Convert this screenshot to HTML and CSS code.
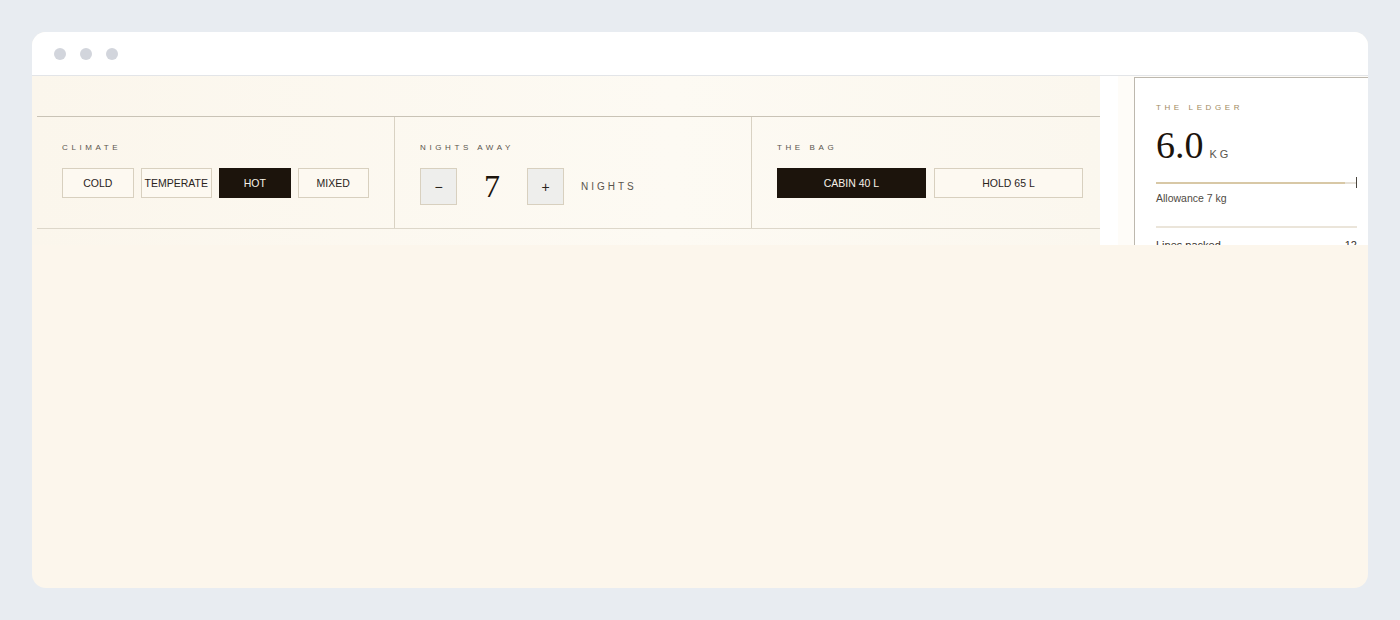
FILE: index.html
```html
<!DOCTYPE html>
<html lang="en">
<head>
  <meta charset="UTF-8">
  <title>Packing Ledger</title>
  <link rel="stylesheet" href="styles.css">
</head>
<body>
  <div class="frame">
    <div class="titlebar">
      <span class="dot"></span>
      <span class="dot"></span>
      <span class="dot"></span>
    </div>

    <div class="viewport">
      <div class="main">
        <div class="controls">
          <div class="cell">
            <div class="label">Climate</div>
            <div class="choices">
              <button class="choice">Cold</button>
              <button class="choice">Temperate</button>
              <button class="choice active">Hot</button>
              <button class="choice">Mixed</button>
            </div>
          </div>

          <div class="cell">
            <div class="label">Nights away</div>
            <div class="stepper">
              <button class="step">&minus;</button>
              <span class="count">7</span>
              <button class="step">+</button>
              <span class="unit">Nights</span>
            </div>
          </div>

          <div class="cell">
            <div class="label">The bag</div>
            <div class="choices bag">
              <button class="choice active">Cabin 40 L</button>
              <button class="choice">Hold 65 L</button>
            </div>
          </div>
        </div>
      </div>

      <div class="gutter"></div>

      <aside class="side">
        <div class="ledger">
          <div class="ledger-label">The ledger</div>
          <div class="weight">
            <span class="weight-num">6.0</span>
            <span class="weight-unit">KG</span>
          </div>
          <div class="meter">
            <div class="meter-fill" style="width: 94%"></div>
            <span class="meter-tick"></span>
          </div>
          <div class="allowance">Allowance 7 kg</div>
          <div class="ledger-row">
            <span>Lines packed</span>
            <span>12</span>
          </div>
        </div>
      </aside>
    </div>
  </div>
</body>
</html>
```

FILE: styles.css
```css
body {
  margin: 0;
  padding: 32px;
  background-color: #e8ecf1;
  font-family: "Liberation Sans", Arial, sans-serif;
  color: #2a241c;
}
.frame {
  height: 556px;
  background-color: #fcf6ec;
  border-radius: 14px;
  overflow: hidden;
}
.titlebar {
  height: 43px;
  background-color: #ffffff;
  border-bottom: 1px solid #e3e5e8;
  display: flex;
  align-items: center;
  gap: 14px;
  padding-left: 22px;
}
.dot {
  width: 12px;
  height: 12px;
  border-radius: 50%;
  background-color: #d2d5dc;
}
.viewport {
  height: 169px;
  display: flex;
  overflow: hidden;
}
.main {
  flex-shrink: 0;
  width: 1063px;
  padding: 40px 0 0 5px;
  overflow: hidden;
  background: linear-gradient(90deg, #fbf6ec, #fdfaf3 60%, #fbf7ee);
}
.controls {
  display: grid;
  grid-template-columns: 357px 357px 357px;
  border-top: 1px solid #c9c3b6;
  border-bottom: 1px solid #ddd7ca;
}
.cell {
  padding: 25px 25px 23px;
}
.cell + .cell {
  border-left: 1px solid #d9d2c3;
}
.label {
  font-size: 8px;
  line-height: 12px;
  letter-spacing: 3.6px;
  text-transform: uppercase;
  color: #5a554d;
  margin-bottom: 14px;
}
.choices {
  display: flex;
  gap: 7px;
}
.choices.bag {
  gap: 8px;
}
.choice {
  flex: 1;
  height: 30px;
  padding: 0;
  font-family: "Liberation Sans", Arial, sans-serif;
  font-size: 10.5px;
  text-transform: uppercase;
  color: #2a241c;
  background-color: #fdf9f1;
  border: 1px solid #d8d0bf;
}
.choice.active {
  background-color: #1c140c;
  border-color: #1c140c;
  color: #f6f1e8;
}
.stepper {
  display: flex;
  align-items: center;
}
.step {
  width: 37px;
  height: 37px;
  padding: 0;
  font-family: "Liberation Sans", Arial, sans-serif;
  font-size: 14px;
  color: #2a241c;
  background-color: #eeeeec;
  border: 1px solid #d8d0bf;
}
.count {
  width: 70px;
  text-align: center;
  font-family: "Liberation Serif", "Times New Roman", serif;
  font-size: 32px;
  color: #1c140c;
}
.unit {
  margin-left: 17px;
  font-size: 10px;
  letter-spacing: 3px;
  text-transform: uppercase;
  color: #5a554d;
}
.gutter {
  flex-shrink: 0;
  width: 18px;
  background-color: #ffffff;
}
.side {
  flex: 1;
  min-width: 0;
  overflow: hidden;
  padding: 1px 0 0 16px;
  background-color: #fefcf8;
}
.ledger {
  width: 201px;
  height: 300px;
  padding: 24px 21px;
  background-color: #ffffff;
  border: 1px solid #bdb8ae;
  border-right: none;
}
.ledger-label {
  font-size: 8px;
  line-height: 12px;
  letter-spacing: 3.6px;
  text-transform: uppercase;
  color: #a28b5f;
  margin-bottom: 9px;
}
.weight {
  display: flex;
  align-items: baseline;
  height: 44px;
}
.weight-num {
  font-family: "Liberation Serif", "Times New Roman", serif;
  font-size: 38px;
  line-height: 44px;
  color: #1c140c;
}
.weight-unit {
  margin-left: 6px;
  font-size: 11px;
  letter-spacing: 3px;
  color: #5a554d;
}
.meter {
  position: relative;
  height: 2px;
  margin-top: 15px;
  background-color: #e6e1d8;
}
.meter-fill {
  height: 2px;
  background-color: #d8c8a6;
}
.meter-tick {
  position: absolute;
  right: 0;
  top: -5px;
  width: 1px;
  height: 11px;
  background-color: #4a453e;
}
.allowance {
  margin-top: 8px;
  font-size: 10.5px;
  color: #4f4a43;
}
.ledger-row {
  display: flex;
  justify-content: space-between;
  margin-top: 22px;
  padding-top: 11px;
  border-top: 2px solid #ebe5da;
  font-size: 11px;
  color: #3a342c;
}
```
